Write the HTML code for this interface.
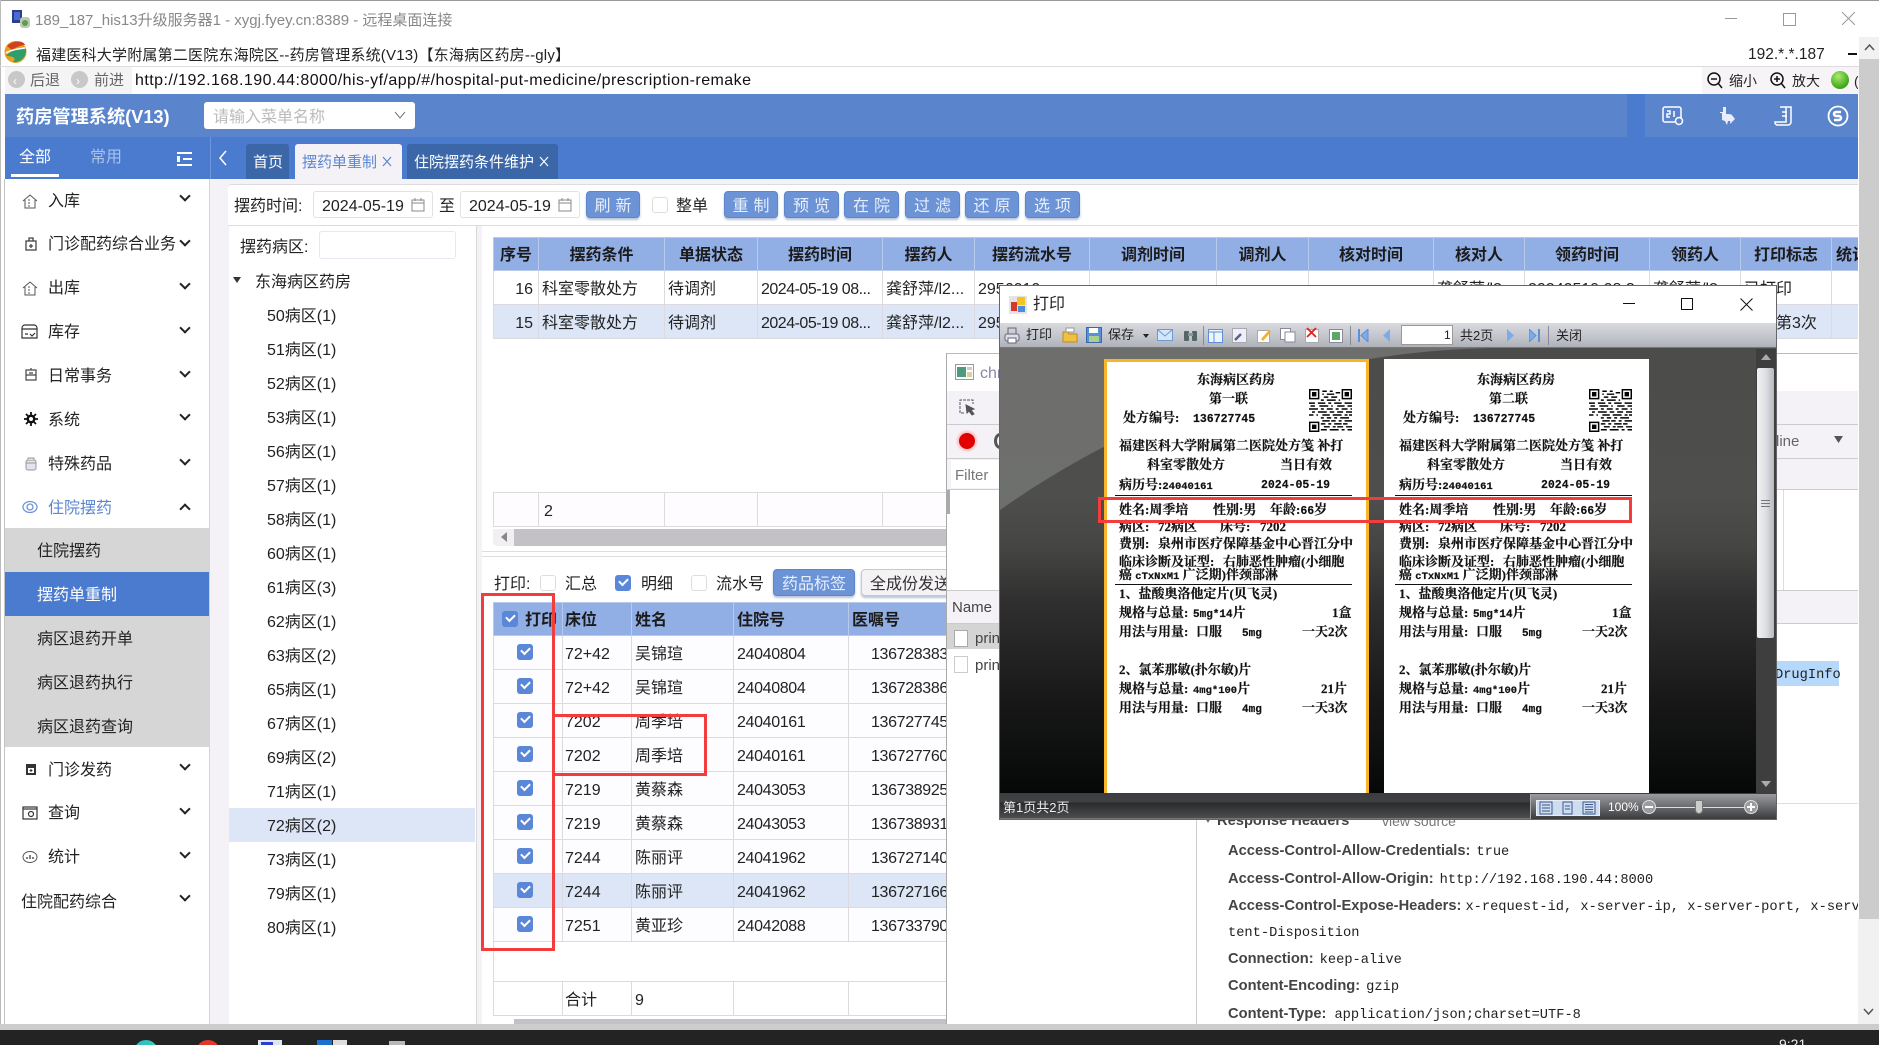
<!DOCTYPE html>
<html lang="zh-CN"><head><meta charset="utf-8"><title>药房管理系统</title>
<style>
html,body{margin:0;padding:0;background:#fff}
#r{position:relative;width:1879px;height:1045px;overflow:hidden;background:#fff;font:16px/20px "Liberation Sans","Noto Sans CJK SC",sans-serif;color:#222}
#r div,#r span.t,#r svg,#r table.a{position:absolute}
#r td div,#r th div{position:relative}
.t{white-space:nowrap;padding-top:1px}
.ch{left:181px;width:6px;height:6px;border-right:2px solid #222;border-bottom:2px solid #222;transform:rotate(45deg);margin-top:-3px}
.btn{height:27px;background:#6c93d6;border:1px solid #5d86cc;border-radius:4px;box-shadow:0 2px 2px #b9c3d6;color:#e8effb;text-align:center;line-height:29px;letter-spacing:5px;text-indent:5px;box-sizing:border-box;white-space:nowrap}
table{border-collapse:collapse;table-layout:fixed}
td,th{border:1px solid #dcd9df;padding:4px 0 0 6px;overflow:hidden;white-space:nowrap;text-align:left;font-weight:400;height:33px;box-sizing:border-box;line-height:20px}
th{background:#92afe5;border-color:#b8c9ea;font-weight:700;color:#1b1b1b}
.tt th{text-align:center;padding:4px 0 0 0}
.tt td{padding-left:3px}
.tt td:nth-child(4){letter-spacing:-.5px}
.lo td:nth-child(n+2),.lo th:nth-child(n+2){padding-left:3px}
.lo td:nth-child(2),.lo th:nth-child(2){padding-left:2px}
.lo td:nth-child(n+4){letter-spacing:-.35px}
.lo td:nth-child(5){padding-left:22px}
.lo th{letter-spacing:0!important}
.hl td{background:#dde6f6}
.cb{left:0;width:16px;height:16px;border:1px solid #ddd;border-radius:3px;background:#fff;box-sizing:border-box}
.ck{width:16px;height:16px;border-radius:3px;background:#5b87d8;box-sizing:border-box}
.ck:after{content:"";position:absolute;left:4px;top:3px;width:7px;height:4px;border-left:2px solid #fff;border-bottom:2px solid #fff;transform:rotate(-45deg)}
.w{left:267px;white-space:nowrap;height:20px}
.m{white-space:nowrap}
.sb{left:24px;width:14px;height:14px}
.pg{top:359px;width:265px;height:445px;background:#fff;overflow:hidden;font:bold 13px/16px "Liberation Serif","Noto Serif CJK SC",serif;color:#111;-webkit-text-stroke:.2px #111}
.pg div{white-space:nowrap;margin-top:1px}
.pg .ln{margin-top:0}
.pg b{font:bold 11.5px/16px "Liberation Mono",monospace}
.pg i{font:bold 10.5px/16px "Liberation Mono",monospace}
.ln{height:1px;background:#111;left:11px;width:237px}
.h{left:1228px;white-space:nowrap;font:bold 14.7px/20px "Liberation Sans",sans-serif;color:#444;width:630px;overflow:hidden;height:21px;padding-top:1px}
.h span{font:13.7px/20px "Liberation Mono",monospace;color:#222;margin-left:6px}
.red{border:3px solid #f33c3c;box-sizing:border-box}
</style></head><body><div id="r">

<!-- window chrome -->
<div style="left:0;top:0;width:1879px;height:1px;background:#999"></div>
<div style="left:0;top:0;width:1px;height:1045px;background:#bbb"></div>
<svg style="left:11px;top:9px" width="20" height="20" viewBox="0 0 20 20"><rect x="1" y="1" width="10" height="13" fill="#2b3f8c"/><rect x="3" y="3" width="6" height="8" fill="#4a6bd0"/><rect x="9" y="8" width="10" height="11" rx="3" fill="#bcc8b8"/><circle cx="14" cy="14" r="3" fill="#5aa04a"/></svg>
<span class="t" style="left:35px;top:10px;font-size:15px;color:#888">189_187_his13升级服务器1 - xygj.fyey.cn:8389 - 远程桌面连接</span>
<div style="left:1725px;top:18px;width:12px;height:1px;background:#999"></div>
<div style="left:1783px;top:13px;width:11px;height:11px;border:1px solid #999"></div>
<svg style="left:1842px;top:12px" width="13" height="13"><path d="M0 0L13 13M13 0L0 13" stroke="#999"/></svg>

<svg style="left:3px;top:40px" width="25" height="24" viewBox="0 0 25 24"><circle cx="12.500" cy="12" r="11" fill="#e8a020"/><path d="M4 6C10 0 20 0 22 5C18 5 12 8 9 10Z" fill="#d0421e"/><path d="M3 16C8 10 16 8 23 9C24 16 18 23 10 22C14 18 10 16 3 16Z" fill="#2f9e6b"/><path d="M3 13C8 10 14 9 22 8" stroke="#fff" stroke-width="1.500" fill="none"/></svg>
<span class="t" style="left:36px;top:45px;font-size:15px;letter-spacing:.2px">福建医科大学附属第二医院东海院区--药房管理系统(V13)【东海病区药房--gly】</span>
<span class="t" style="left:1748px;top:44px;font-size:15.500px">192.*.*.187</span>
<div style="left:1848px;top:53px;width:9px;height:2px;background:#111"></div>
<div style="left:0;top:66px;width:1859px;height:1px;background:#ddd"></div>

<div style="left:5px;top:67px;width:127px;height:27px;background:#f4f4f4"></div>
<div style="left:8px;top:71px;width:17px;height:17px;border-radius:50%;background:#c8c8c8"></div>
<span class="t" style="left:13px;top:70px;font-size:12px;color:#fff">‹</span>
<span class="t" style="left:30px;top:70px;font-size:15px;color:#666">后退</span>
<div style="left:71px;top:71px;width:17px;height:17px;border-radius:50%;background:#c8c8c8"></div>
<span class="t" style="left:76px;top:70px;font-size:12px;color:#fff">›</span>
<span class="t" style="left:94px;top:70px;font-size:15px;color:#666">前进</span>
<span class="t" style="left:135px;top:70px;font-size:16px;letter-spacing:.44px;color:#111">http://192.168.190.44:8000/his-yf/app/#/hospital-put-medicine/prescription-remake</span>
<div style="left:1702px;top:67px;width:157px;height:27px;background:#f6f4f7"></div>
<svg style="left:1706px;top:71px" width="18" height="18"><circle cx="8" cy="8" r="6" fill="none" stroke="#111" stroke-width="1.500"/><path d="M5 8h6M12 12l4 5" stroke="#111" stroke-width="1.500"/></svg>
<span class="t" style="left:1729px;top:70px;font-size:14px">缩小</span>
<svg style="left:1769px;top:71px" width="18" height="18"><circle cx="8" cy="8" r="6" fill="none" stroke="#111" stroke-width="1.500"/><path d="M5 8h6M8 5v6M12 12l4 5" stroke="#111" stroke-width="1.500"/></svg>
<span class="t" style="left:1792px;top:70px;font-size:14px">放大</span>
<div style="left:1831px;top:71px;width:18px;height:18px;border-radius:50%;background:radial-gradient(circle at 40% 30%,#a8ec6a,#3fa51c 70%)"></div>
<span class="t" style="left:1854px;top:70px;font-size:14px;width:4px;overflow:hidden">(</span>

<!-- right scrollbar -->
<div style="left:1859px;top:37px;width:20px;height:993px;background:#ccc"></div>
<div style="left:1859px;top:37px;width:20px;height:22px;background:#f1f1f1"></div>
<svg style="left:1864px;top:43px" width="11" height="8"><path d="M1 7L5.500 2L10 7" stroke="#555" stroke-width="1.500" fill="none"/></svg>
<div style="left:1858px;top:919px;width:21px;height:105px;background:#f1f1f1"></div>
<svg style="left:1863px;top:1008px" width="11" height="8"><path d="M1 1L5.500 6L10 1" stroke="#555" stroke-width="1.500" fill="none"/></svg>

<!-- header -->
<div style="left:5px;top:94px;width:1853px;height:43px;background:#5a85cc"></div>
<div style="left:1627px;top:94px;width:18px;height:43px;background:#4b7bcf"></div>
<span class="t" style="left:16px;top:105px;font-size:18.200px;line-height:22px;font-weight:700;color:#fff">药房管理系统(V13)</span>
<div style="left:204px;top:102px;width:211px;height:27px;background:#fff;border-radius:3px"></div>
<span class="t" style="left:213px;top:107px;color:#bbb">请输入菜单名称</span>
<svg style="left:394px;top:111px" width="12" height="9"><path d="M1 1L6 7L11 1" stroke="#777" fill="none"/></svg>
<svg style="left:1661px;top:105px" width="26" height="22" viewBox="0 0 26 22" fill="none" stroke="#fff" stroke-width="1.500"><rect x="2" y="2" width="18" height="15" rx="2"/><circle cx="18" cy="16" r="3.500" fill="#5a85cc"/><path d="M6 6h3v3H6v3h3M13 6v6"/></svg>
<svg style="left:1717px;top:105px" width="20" height="22" viewBox="0 0 20 22" fill="#e8effb"><path d="M6 2h3v7h3l3 1v6l-4 0-1 4-2-4-3-1V8L3 8V7h3z"/><path d="M14 9l4 5-5 5z"/></svg>
<svg style="left:1773px;top:105px" width="20" height="22" viewBox="0 0 20 22" fill="none" stroke="#fff" stroke-width="1.500"><path d="M7 2h11v15a3 3 0 0 1-3 3H4a3 3 0 0 1-2-3h11V2M9 7h5M9 11h5"/></svg>
<svg style="left:1827px;top:105px" width="22" height="22" viewBox="0 0 22 22" fill="none" stroke="#fff" stroke-width="1.800"><circle cx="11" cy="11" r="9.500"/><path d="M14 7H9a2 2 0 0 0 0 4h3a2 2 0 0 1 0 4H7" stroke-width="2.500"/></svg>

<div style="left:5px;top:137px;width:1853px;height:42px;background:#4b7bcf"></div>
<span class="t" style="left:19px;top:147px;color:#fff">全部</span>
<span class="t" style="left:90px;top:147px;color:#a9c2ec">常用</span>
<div style="left:11px;top:174px;width:48px;height:3px;background:#fff"></div>
<div style="left:177px;top:152px;width:15px;height:2px;background:#fff"></div>
<div style="left:183px;top:158px;width:9px;height:2px;background:#fff"></div>
<div style="left:177px;top:164px;width:15px;height:2px;background:#fff"></div>
<div style="left:177px;top:156px;width:3px;height:6px;background:#fff"></div>
<div style="left:210px;top:137px;width:1px;height:42px;background:#6e97db"></div>
<svg style="left:218px;top:150px" width="10" height="16"><path d="M8 1L2 8L8 15" stroke="#fff" stroke-width="1.500" fill="none"/></svg>
<div style="left:246px;top:144px;width:43px;height:35px;background:#3b67a8;border-radius:3px 3px 0 0"></div>
<span class="t" style="left:253px;top:152px;font-size:15px;color:#fff">首页</span>
<div style="left:295px;top:144px;width:107px;height:35px;background:#f5f2f7;border-radius:3px 3px 0 0"></div>
<span class="t" style="left:302px;top:152px;font-size:15px;color:#5b87d0">摆药单重制</span>
<svg style="left:382px;top:156px" width="10" height="11"><path d="M1 1L9 10M9 1L1 10" stroke="#5b87d0" stroke-width="1.200"/></svg>
<div style="left:407px;top:144px;width:151px;height:35px;background:#3b67a8;border-radius:3px 3px 0 0"></div>
<span class="t" style="left:414px;top:152px;font-size:15px;color:#fff">住院摆药条件维护</span>
<svg style="left:539px;top:156px" width="10" height="11"><path d="M1 1L9 10M9 1L1 10" stroke="#fff" stroke-width="1.200"/></svg>

<!-- body -->
<div style="left:5px;top:179px;width:1853px;height:845px;background:#f5f2f7"></div>
<div style="left:4px;top:179px;width:1px;height:845px;background:#c4c4c4"></div>
<div style="left:5px;top:179px;width:204px;height:845px;background:#fff"></div>
<div style="left:209px;top:179px;width:1px;height:845px;background:#d4d4d4"></div>

<!-- sidebar -->
<div style="left:5px;top:528px;width:204px;height:219px;background:#d6d6d6"></div>
<div style="left:5px;top:572px;width:204px;height:44px;background:#4b7bcf"></div>
<svg class="sb" style="top:194px;left:22px;width:16px;height:16px" viewBox="0 0 16 16" fill="none" stroke="#555"><path d="M1 7L8 1L15 7M3 6v8h10V6M6 6h2M6 9h2M6 12h2" /></svg>
<span class="t m" style="left:48px;top:191px">入库</span><div class="ch" style="top:195px"></div>
<svg class="sb" style="top:237px" viewBox="0 0 14 14" fill="none" stroke="#444" stroke-width="1.300"><rect x="2" y="4" width="10" height="9"/><path d="M5 4V1h4v3M7 7v4M5 9h4"/></svg>
<span class="t m" style="left:48px;top:234px">门诊配药综合业务</span><div class="ch" style="top:240px"></div>
<svg class="sb" style="top:281px;left:22px;width:16px;height:16px" viewBox="0 0 16 16" fill="none" stroke="#555"><path d="M1 7L8 1L15 7M3 6v8h10V6M6 6h2M6 9h2M6 12h2"/></svg>
<span class="t m" style="left:48px;top:278px">出库</span><div class="ch" style="top:283px"></div>
<svg class="sb" style="top:323px;left:21px;width:17px;height:16px" viewBox="0 0 17 16" fill="none" stroke="#333" stroke-width="1.200"><path d="M1 5a3 3 0 0 1 3-3h9a3 3 0 0 1 3 3v10H1zM1 6h15M4 11h3M9 11l2 2 3-3"/></svg>
<span class="t m" style="left:48px;top:322px">库存</span><div class="ch" style="top:327px"></div>
<svg class="sb" style="top:368px" viewBox="0 0 14 14" fill="none" stroke="#444" stroke-width="1.200"><rect x="2" y="2" width="10" height="10"/><path d="M7 0v2M2 7h10M5 5h4"/></svg>
<span class="t m" style="left:48px;top:366px">日常事务</span><div class="ch" style="top:371px"></div>
<svg class="sb" style="top:412px" viewBox="0 0 14 14"><circle cx="7" cy="7" r="3" fill="none" stroke="#111" stroke-width="3"/><path d="M7 0v14M0 7h14M2 2l10 10M12 2L2 12" stroke="#111" stroke-width="1.800"/><circle cx="7" cy="7" r="2" fill="#fff"/></svg>
<span class="t m" style="left:48px;top:410px">系统</span><div class="ch" style="top:414px"></div>
<svg class="sb" style="top:457px" viewBox="0 0 14 14" fill="#dfe4ee" stroke="#999"><rect x="2" y="3" width="10" height="10" rx="2"/><path d="M4 3V1h6v2M2 6h10"/></svg>
<span class="t m" style="left:48px;top:454px">特殊药品</span><div class="ch" style="top:459px"></div>
<svg class="sb" style="top:500px;left:22px;width:16px;height:14px" viewBox="0 0 16 14" fill="none" stroke="#6f95dc" stroke-width="1.300"><ellipse cx="8" cy="7" rx="7" ry="5.500"/><circle cx="8" cy="7" r="3"/></svg>
<span class="t m" style="left:48px;top:498px;color:#5b87d0">住院摆药</span><div class="ch" style="top:508px;transform:rotate(225deg)"></div>
<span class="t m" style="left:37px;top:541px">住院摆药</span>
<span class="t m" style="left:37px;top:585px;color:#fff">摆药单重制</span>
<span class="t m" style="left:37px;top:629px">病区退药开单</span>
<span class="t m" style="left:37px;top:673px">病区退药执行</span>
<span class="t m" style="left:37px;top:717px">病区退药查询</span>
<svg class="sb" style="top:762px" viewBox="0 0 14 14"><rect x="2" y="2" width="10" height="11" fill="#333"/><rect x="4" y="6" width="6" height="5" fill="#fff"/><path d="M7 7v3M5.500 8.500h3" stroke="#333"/></svg>
<span class="t m" style="left:48px;top:760px">门诊发药</span><div class="ch" style="top:764px"></div>
<svg class="sb" style="top:806px;left:22px;width:16px;height:14px" viewBox="0 0 16 14" fill="none" stroke="#333" stroke-width="1.200"><rect x="1" y="1" width="14" height="12"/><circle cx="9" cy="8" r="2.500"/><path d="M1 3h14"/></svg>
<span class="t m" style="left:48px;top:803px">查询</span><div class="ch" style="top:808px"></div>
<svg class="sb" style="top:850px;left:22px;width:16px;height:14px" viewBox="0 0 16 14"><ellipse cx="8" cy="7" rx="7" ry="5.500" fill="none" stroke="#555"/><path d="M5 9V7M8 9V5M11 9V7" stroke="#555" stroke-width="1.500"/></svg>
<span class="t m" style="left:48px;top:847px">统计</span><div class="ch" style="top:852px"></div>
<span class="t m" style="left:21px;top:892px">住院配药综合</span><div class="ch" style="top:895px"></div>

<!-- main toolbar -->
<div style="left:228px;top:184px;width:1630px;height:42px;background:#fff;border-top:1px solid #dcdcdc;border-bottom:1px solid #dcdcdc;box-sizing:border-box;border-radius:3px 0 0 0"></div>
<span class="t" style="left:234px;top:196px">摆药时间:</span>
<div style="left:313px;top:191px;width:120px;height:27px;background:#fff;border:1px solid #e2e2e2;border-radius:3px;box-sizing:border-box"></div>
<span class="t" style="left:322px;top:196px">2024-05-19</span>
<svg style="left:411px;top:198px" width="14" height="14" fill="none" stroke="#888"><rect x="1" y="2" width="12" height="11"/><path d="M1 5h12M4 0v3M10 0v3"/></svg>
<span class="t" style="left:439px;top:196px">至</span>
<div style="left:460px;top:191px;width:120px;height:27px;background:#fff;border:1px solid #e2e2e2;border-radius:3px;box-sizing:border-box"></div>
<span class="t" style="left:469px;top:196px">2024-05-19</span>
<svg style="left:558px;top:198px" width="14" height="14" fill="none" stroke="#888"><rect x="1" y="2" width="12" height="11"/><path d="M1 5h12M4 0v3M10 0v3"/></svg>
<div class="btn" style="left:586px;top:191px;width:54px">刷新</div>
<div class="cb" style="left:652px;top:197px"></div>
<span class="t" style="left:676px;top:196px">整单</span>
<div class="btn" style="left:724px;top:191px;width:54px">重制</div>
<div class="btn" style="left:784px;top:191px;width:55px">预览</div>
<div class="btn" style="left:844px;top:191px;width:55px">在院</div>
<div class="btn" style="left:905px;top:191px;width:55px">过滤</div>
<div class="btn" style="left:965px;top:191px;width:54px">还原</div>
<div class="btn" style="left:1025px;top:191px;width:55px">选项</div>

<!-- ward panel -->
<div style="left:229px;top:226px;width:247px;height:798px;background:#fff"></div>
<div style="left:476px;top:226px;width:1px;height:798px;background:#d8d8d8"></div>
<span class="t" style="left:240px;top:237px">摆药病区:</span>
<div style="left:319px;top:231px;width:137px;height:28px;background:#fff;border:1px solid #e4e8f2;border-radius:3px;box-sizing:border-box"></div>
<svg style="left:233px;top:277px" width="9" height="7"><path d="M0 0h8L4 6z" fill="#333"/></svg>
<span class="t" style="left:255px;top:272px">东海病区药房</span>
<div style="left:229px;top:808px;width:246px;height:34px;background:#dde6f6"></div>
<span class="t w" style="top:306px">50病区(1)</span>
<span class="t w" style="top:340px">51病区(1)</span>
<span class="t w" style="top:374px">52病区(1)</span>
<span class="t w" style="top:408px">53病区(1)</span>
<span class="t w" style="top:442px">56病区(1)</span>
<span class="t w" style="top:476px">57病区(1)</span>
<span class="t w" style="top:510px">58病区(1)</span>
<span class="t w" style="top:544px">60病区(1)</span>
<span class="t w" style="top:578px">61病区(3)</span>
<span class="t w" style="top:612px">62病区(1)</span>
<span class="t w" style="top:646px">63病区(2)</span>
<span class="t w" style="top:680px">65病区(1)</span>
<span class="t w" style="top:714px">67病区(1)</span>
<span class="t w" style="top:748px">69病区(2)</span>
<span class="t w" style="top:782px">71病区(1)</span>
<span class="t w" style="top:816px">72病区(2)</span>
<span class="t w" style="top:850px">73病区(1)</span>
<span class="t w" style="top:884px">79病区(1)</span>
<span class="t w" style="top:918px">80病区(1)</span>

<!-- right content -->
<div style="left:482px;top:226px;width:1376px;height:798px;background:#fff"></div>
<div style="left:493px;top:237px;width:1365px;height:102px;overflow:hidden">
<table class="tt" style="width:1440px;background:#fff">
<colgroup><col style="width:45px"><col style="width:126px"><col style="width:93px"><col style="width:125px"><col style="width:92px"><col style="width:115px"><col style="width:127px"><col style="width:92px"><col style="width:125px"><col style="width:91px"><col style="width:125px"><col style="width:91px"><col style="width:91px"><col style="width:102px"></colgroup>
<tr><th>序号</th><th>摆药条件</th><th>单据状态</th><th>摆药时间</th><th>摆药人</th><th>摆药流水号</th><th>调剂时间</th><th>调剂人</th><th>核对时间</th><th>核对人</th><th>领药时间</th><th>领药人</th><th>打印标志</th><th style="text-align:left;padding-left:4px">统计</th></tr>
<tr style="height:34px"><td style="text-align:right;padding:4px 5px 0 0">16</td><td>科室零散处方</td><td>待调剂</td><td>2024-05-19 08...</td><td>龚舒萍/l2...</td><td>2956010</td><td></td><td></td><td></td><td>龚舒萍/l2...</td><td>20240519 08:3</td><td>龚舒萍/l2...</td><td>已打印</td><td></td></tr>
<tr class="hl" style="height:34px"><td style="text-align:right;padding:4px 5px 0 0">15</td><td>科室零散处方</td><td>待调剂</td><td>2024-05-19 08...</td><td>龚舒萍/l2...</td><td>2956011</td><td></td><td></td><td></td><td></td><td></td><td></td><td>打印第3次</td><td></td></tr>
</table></div>
<div style="left:493px;top:492px;width:453px;height:35px;overflow:hidden">
<table style="width:500px;background:#fefcff"><colgroup><col style="width:45px"><col style="width:126px"><col style="width:93px"><col style="width:125px"><col style="width:111px"></colgroup>
<tr style="height:34px"><td></td><td style="padding-left:5px">2</td><td></td><td></td><td></td></tr></table></div>
<div style="left:493px;top:529px;width:453px;height:17px;background:#f1eff2;border-radius:0 0 0 4px"></div>
<div style="left:514px;top:529px;width:432px;height:17px;background:#c3c1c5"></div>
<svg style="left:500px;top:532px" width="8" height="11"><path d="M7 0v10L1 5z" fill="#888"/></svg>
<div style="left:482px;top:551px;width:1376px;height:1px;background:#ddd"></div>
<div style="left:482px;top:556px;width:1376px;height:1px;background:#ddd"></div>

<span class="t" style="left:494px;top:574px">打印:</span>
<div class="cb" style="left:540px;top:575px"></div><span class="t" style="left:565px;top:574px">汇总</span>
<div class="ck" style="left:615px;top:575px"></div><span class="t" style="left:641px;top:574px">明细</span>
<div class="cb" style="left:691px;top:575px"></div><span class="t" style="left:716px;top:574px">流水号</span>
<div class="btn" style="left:773px;top:569px;width:82px;letter-spacing:0;text-indent:0">药品标签</div>
<div class="btn" style="left:861px;top:569px;width:110px;letter-spacing:0;text-indent:0;background:#f4f2f5;border-color:#c8c8c8;color:#333;text-align:left;padding-left:8px">全成份发送</div>

<div style="left:493px;top:602px;width:453px;height:340px;overflow:hidden">
<table class="lo" style="width:500px;background:#fdfcfe"><colgroup><col style="width:69px"><col style="width:69px"><col style="width:102px"><col style="width:115px"><col style="width:145px"></colgroup>
<tr><th style="padding-left:8px"><div class="ck" style="float:left;margin-top:0"></div><span style="margin-left:7px">打印</span></th><th>床位</th><th>姓名</th><th>住院号</th><th>医嘱号</th></tr>
<tr style="height:34px"><td><div class="ck" style="margin:-6px 0 0 17px"></div></td><td>72+42</td><td>吴锦瑄</td><td>24040804</td><td>136728383</td></tr>
<tr style="height:34px"><td><div class="ck" style="margin:-6px 0 0 17px"></div></td><td>72+42</td><td>吴锦瑄</td><td>24040804</td><td>136728386</td></tr>
<tr style="height:34px"><td><div class="ck" style="margin:-6px 0 0 17px"></div></td><td>7202</td><td>周季培</td><td>24040161</td><td>136727745</td></tr>
<tr style="height:34px"><td><div class="ck" style="margin:-6px 0 0 17px"></div></td><td>7202</td><td>周季培</td><td>24040161</td><td>136727760</td></tr>
<tr style="height:34px"><td><div class="ck" style="margin:-6px 0 0 17px"></div></td><td>7219</td><td>黄蔡森</td><td>24043053</td><td>136738925</td></tr>
<tr style="height:34px"><td><div class="ck" style="margin:-6px 0 0 17px"></div></td><td>7219</td><td>黄蔡森</td><td>24043053</td><td>136738931</td></tr>
<tr style="height:34px"><td><div class="ck" style="margin:-6px 0 0 17px"></div></td><td>7244</td><td>陈丽评</td><td>24041962</td><td>136727140</td></tr>
<tr class="hl" style="height:34px"><td><div class="ck" style="margin:-6px 0 0 17px"></div></td><td>7244</td><td>陈丽评</td><td>24041962</td><td>136727166</td></tr>
<tr style="height:34px"><td><div class="ck" style="margin:-6px 0 0 17px"></div></td><td>7251</td><td>黄亚珍</td><td>24042088</td><td>136733790</td></tr>
</table></div>
<div style="left:493px;top:942px;width:1px;height:40px;background:#dcd9df"></div>
<div style="left:493px;top:981px;width:453px;height:35px;overflow:hidden">
<table class="lo" style="width:500px;background:#fff"><colgroup><col style="width:69px"><col style="width:69px"><col style="width:102px"><col style="width:115px"><col style="width:145px"></colgroup>
<tr style="height:34px"><td></td><td>合计</td><td>9</td><td></td><td></td></tr></table></div>
<div style="left:514px;top:1019px;width:432px;height:5px;background:#c3c1c5"></div>

<!-- devtools panel -->
<div style="left:946px;top:353px;width:912px;height:671px;background:#fff;border-left:1px solid #aaa;border-top:1px solid #bbb;box-sizing:border-box"></div>
<svg style="left:955px;top:364px" width="19" height="16"><rect x=".5" y=".5" width="18" height="15" fill="#fff" stroke="#999"/><rect x="2" y="3" width="9" height="10" fill="#4f9a7f"/><rect x="12" y="3" width="5" height="3" fill="#ccc"/><rect x="12" y="8" width="5" height="5" fill="#d8d0a0"/></svg>
<span class="t" style="left:980px;top:363px;font-size:16px;color:#88a;width:19px;overflow:hidden">chrome</span>
<div style="left:947px;top:391px;width:911px;height:98px;background:#f5f2f7"></div>
<div style="left:947px;top:424px;width:911px;height:1px;background:#ccc"></div>
<div style="left:947px;top:458px;width:911px;height:1px;background:#ccc"></div>
<div style="left:947px;top:489px;width:911px;height:1px;background:#ccc"></div>
<svg style="left:959px;top:399px" width="18" height="18" fill="none" stroke="#555"><path d="M5 14H1V1h13v4" stroke-dasharray="3 1"/><path d="M7 6l8 4-3 1 3 4-2 1-3-4-2 2z" fill="#555"/></svg>
<div style="left:959px;top:433px;width:16px;height:16px;border-radius:50%;background:#e00000;box-shadow:0 0 2px 2px #f6c0c0"></div>
<div style="left:994px;top:433px;width:12px;height:16px;border:3px solid #555;border-radius:50%;box-sizing:border-box"></div>
<div style="left:951px;top:460px;width:48px;height:28px;background:#fff"></div>
<span class="t" style="left:955px;top:465px;font-size:15px;color:#777">Filter</span>
<div style="left:947px;top:490px;width:3px;height:24px;background:#aaa"></div>
<div style="left:947px;top:590px;width:911px;height:34px;background:#f5f2f7;border-top:1px solid #ccc;border-bottom:1px solid #ccc;box-sizing:border-box"></div>
<span class="t" style="left:952px;top:597px;font-size:15px;color:#444">Name</span>
<div style="left:947px;top:624px;width:60px;height:25px;background:#d4d4d4"></div>
<div style="left:954px;top:630px;width:14px;height:17px;background:#fff;border:1px solid #aaa;box-sizing:border-box"></div>
<span class="t" style="left:975px;top:628px;font-size:15px;color:#444">print</span>
<div style="left:954px;top:656px;width:14px;height:17px;background:#fff;border:1px solid #ccc;box-sizing:border-box"></div>
<span class="t" style="left:975px;top:655px;font-size:15px;color:#444">print</span>
<div style="left:1196px;top:590px;width:1px;height:434px;background:#ccc"></div>
<div style="left:1783px;top:490px;width:1px;height:100px;background:#ddd"></div>
<span class="t" style="left:1776px;top:431px;font-size:15px;color:#666">line</span>
<svg style="left:1834px;top:436px" width="10" height="8"><path d="M0 0h9L4.500 7z" fill="#555"/></svg>
<div style="left:1776px;top:661px;width:63px;height:25px;background:#b5d8fb"></div>
<span class="t" style="left:1775px;top:665px;font:13.7px/20px 'Liberation Mono',monospace;color:#222">DrugInfo</span>
<div style="left:1776px;top:803px;width:82px;height:1px;background:#ddd"></div>

<svg style="left:1204px;top:816px" width="9" height="8"><path d="M0 0h8L4 7z" fill="#666"/></svg>
<span class="t" style="left:1217px;top:810px;font:bold 14.7px/20px 'Liberation Sans',sans-serif;color:#444">Response Headers</span>
<span class="t" style="left:1382px;top:810px;font-size:14px;color:#777">view source</span>
<div class="h" style="top:840px">Access-Control-Allow-Credentials:<span>true</span></div>
<div class="h" style="top:868px">Access-Control-Allow-Origin:<span>http://192.168.190.44:8000</span></div>
<div class="h" style="top:895px">Access-Control-Expose-Headers:<span style="margin-left:4px">x-request-id, x-server-ip, x-server-port, x-server-timing</span></div>
<div class="h" style="top:921px"><span style="margin:0">tent-Disposition</span></div>
<div class="h" style="top:948px">Connection:<span>keep-alive</span></div>
<div class="h" style="top:975px">Content-Encoding:<span>gzip</span></div>
<div class="h" style="top:1003px;height:20px">Content-Type:<span style="margin-left:8px">application/json;charset=UTF-8</span></div>

<!-- print dialog -->
<div style="left:999px;top:285px;width:778px;height:535px;background:#fff;border:1px solid #666;box-sizing:border-box"></div>
<svg style="left:1009px;top:296px" width="18" height="18"><rect width="18" height="18" fill="#e4e4e4"/><rect x="2" y="6" width="6" height="9" fill="#d8362a"/><rect x="8" y="1" width="8" height="8" fill="#f2c522"/><rect x="9" y="10" width="7" height="6" fill="#4d8be0"/></svg>
<span class="t" style="left:1033px;top:294px">打印</span>
<div style="left:1623px;top:303px;width:12px;height:1px;background:#111"></div>
<div style="left:1681px;top:298px;width:12px;height:12px;border:1px solid #111;box-sizing:border-box"></div>
<svg style="left:1740px;top:298px" width="13" height="13"><path d="M.5 .5L12.500 12.500M12.500 .5L.5 12.500" stroke="#111"/></svg>
<div style="left:1000px;top:323px;width:776px;height:25px;background:linear-gradient(#d9dadf,#c2c4cb 60%,#aeb1b8);border-bottom:1px solid #777;box-sizing:border-box"></div>

<svg style="left:1004px;top:327px" width="16" height="17" fill="none" stroke="#667"><path d="M4 7V1h8v6"/><rect x="1" y="7" width="14" height="7" rx="2" fill="#dde"/><rect x="4" y="11" width="8" height="5" fill="#fff"/></svg>
<span class="t" style="left:1026px;top:324px;font-size:13px">打印</span>
<svg style="left:1062px;top:327px" width="16" height="16"><path d="M1 5h5l1 2h8v8H1z" fill="#f0c040" stroke="#c08a20"/><rect x="4" y="1" width="8" height="4" fill="#fff" stroke="#999"/></svg>
<svg style="left:1086px;top:327px" width="16" height="16"><rect x=".5" y=".5" width="15" height="15" fill="#5b8fd8" stroke="#3a68a8"/><rect x="3" y="1" width="9" height="5" fill="#fff"/><rect x="3" y="9" width="10" height="6" fill="#a9d08a"/></svg>
<span class="t" style="left:1108px;top:324px;font-size:13px">保存</span>
<svg style="left:1143px;top:334px" width="7" height="4"><path d="M0 0h6L3 4z" fill="#222"/></svg>
<svg style="left:1157px;top:329px" width="16" height="12"><rect x=".5" y=".5" width="15" height="11" fill="#d4e6fa" stroke="#6c9ad0"/><path d="M1 1l7 6 7-6" fill="none" stroke="#6c9ad0"/></svg>
<svg style="left:1183px;top:328px" width="15" height="14"><rect x="1" y="3" width="5" height="10" fill="#566" rx="1"/><rect x="9" y="3" width="5" height="10" fill="#566" rx="1"/><rect x="5" y="5" width="5" height="3" fill="#899"/></svg>
<div style="left:1203px;top:326px;width:1px;height:19px;background:#889"></div>
<svg style="left:1208px;top:329px" width="15" height="14"><rect x=".5" y=".5" width="14" height="13" fill="#eef4fc" stroke="#5b8fd8"/><path d="M1 3h13M6 3v10" stroke="#5b8fd8"/></svg>
<svg style="left:1232px;top:328px" width="15" height="15"><rect x=".5" y=".5" width="14" height="14" fill="#eef" stroke="#aaa"/><path d="M3 12l6-6" stroke="#567" stroke-width="2.500"/></svg>
<svg style="left:1257px;top:328px" width="15" height="15"><rect x=".5" y="2.500" width="12" height="12" fill="#fff" stroke="#aaa"/><path d="M4 11l8-9 2 2-8 9z" fill="#f0b030"/></svg>
<svg style="left:1280px;top:328px" width="16" height="15"><rect x=".5" y=".5" width="10" height="11" fill="#fff" stroke="#889"/><rect x="5" y="4" width="10" height="10" fill="#fff" stroke="#889"/></svg>
<svg style="left:1305px;top:327px" width="14" height="16"><rect x=".5" y="2.500" width="13" height="13" fill="#fff" stroke="#aaa"/><path d="M2 1l9 9M11 1l-9 9" stroke="#d22" stroke-width="1.800"/></svg>
<svg style="left:1329px;top:329px" width="14" height="14"><rect x=".5" y=".5" width="13" height="13" fill="#fff" stroke="#889"/><rect x="3" y="3" width="8" height="8" fill="#5ca86a"/></svg>
<div style="left:1350px;top:326px;width:1px;height:19px;background:#889"></div>
<svg style="left:1358px;top:329px" width="11" height="13"><rect width="2" height="13" fill="#5b8fd8"/><path d="M10 0v13L3 6.500z" fill="#7eaae6" stroke="#5b8fd8"/></svg>
<svg style="left:1383px;top:329px" width="8" height="13"><path d="M7 0v13L0 6.500z" fill="#7eaae6"/></svg>
<div style="left:1401px;top:325px;width:52px;height:20px;background:#fff;border:1px solid #999;box-sizing:border-box"></div>
<span class="t" style="left:1444px;top:324px;font-size:12px">1</span>
<span class="t" style="left:1460px;top:325px;font-size:13px">共2页</span>
<svg style="left:1507px;top:329px" width="8" height="13"><path d="M0 0v13L7 6.500z" fill="#7eaae6"/></svg>
<svg style="left:1529px;top:329px" width="11" height="13"><rect x="9" width="2" height="13" fill="#5b8fd8"/><path d="M0 0v13L7 6.500z" fill="#7eaae6" stroke="#5b8fd8"/></svg>
<div style="left:1548px;top:326px;width:1px;height:19px;background:#889"></div>
<span class="t" style="left:1556px;top:325px;font-size:13px">关闭</span>

<!-- canvas -->
<div style="left:1000px;top:348px;width:776px;height:445px;overflow:hidden;background:linear-gradient(#4c4c4a 0,#4e4f4d 150px,#454543 199px,#303030 252px,#181818 352px,#060808 100%)"></div>
<svg style="left:1000px;top:348px" width="776" height="445"><path d="M0 0H490C300 4 130 70 0 162Z" fill="#7a7b78" opacity=".75"/></svg>

<!-- receipts -->
<div class="pg" style="left:1104px;box-shadow:inset 0 0 0 3px #f8b52c">
<div style="left:93px;top:12px">东海病区药房</div><div style="left:105px;top:31px">第一联</div>
<div style="left:19px;top:50px">处方编号:</div><div style="left:89px;top:50px"><b>136727745</b></div>
<svg style="left:205px;top:30px" width="43" height="43" viewBox="0 0 29 29"><g fill="none" stroke="#000"><rect x=".5" y=".5" width="6" height="6"/><rect x="22.500" y=".5" width="6" height="6"/><rect x=".5" y="22.500" width="6" height="6"/><path d="M9 1.500h3M14 1.500h2M18 2.500h3M9 3.500h1M12 3.500h5M10 5.500h3M15 5.500h4M8 7.500h2M12 7.500h6M20 7.500h1M0 9.500h4M6 9.500h5M13 9.500h2M17 9.500h5M24 9.500h5M1 11.500h3M7 11.500h6M15 11.500h1M19 11.500h5M26 11.500h3M0 13.500h6M8 13.500h2M12 13.500h4M18 13.500h2M22 13.500h4M28 13.500h1M2 15.500h2M6 15.500h6M14 15.500h3M19 15.500h4M25 15.500h4M0 17.500h3M5 17.500h1M9 17.500h5M16 17.500h6M24 17.500h2M27 17.500h2M8 19.500h2M12 19.500h3M17 19.500h2M21 19.500h6M9 21.500h5M15 21.500h3M20 21.500h2M24 21.500h5M8 23.500h3M13 23.500h2M17 23.500h5M23 23.500h3M10 25.500h4M16 25.500h2M19 25.500h4M25 25.500h4M8 27.500h4M14 27.500h6M22 27.500h2M26 27.500h3"/></g><g fill="#000"><rect x="2" y="2" width="3" height="3"/><rect x="24" y="2" width="3" height="3"/><rect x="2" y="24" width="3" height="3"/></g></svg>
<div style="left:15px;top:78px">福建医科大学附属第二医院处方笺 补打</div>
<div style="left:43px;top:97px">科室零散处方</div><div style="left:176px;top:97px">当日有效</div>
<div style="left:15px;top:117px">病历号:<i>24040161</i></div><div style="left:157px;top:116px"><b>2024-05-19</b></div>
<div class="ln" style="top:136px"></div>
<div style="left:15px;top:142px">姓名:周季培</div><div style="left:109px;top:142px">性别:男</div><div style="left:166px;top:142px">年龄:<b>66</b>岁</div>
<div style="left:15px;top:159px">病区:</div><div style="left:54px;top:159px">72病区</div><div style="left:116px;top:159px">床号:</div><div style="left:156px;top:159px">7202</div>
<div style="left:15px;top:176px">费别:</div><div style="left:54px;top:176px">泉州市医疗保障基金中心晋江分中</div>
<div style="left:15px;top:194px">临床诊断及证型:</div><div style="left:119px;top:194px">右肺恶性肿瘤(小细胞</div>
<div style="left:15px;top:207px">癌 <i>cTxNxM1</i> 广泛期)伴颈部淋</div>
<div class="ln" style="top:225px"></div>
<div style="left:15px;top:226px">1、盐酸奥洛他定片(贝飞灵)</div>
<div style="left:15px;top:245px">规格与总量:</div><div style="left:89px;top:245px"><i style="font-size:11px">5mg*14</i>片</div><div style="left:228px;top:245px">1盒</div>
<div style="left:15px;top:264px">用法与用量:</div><div style="left:92px;top:264px">口服</div><div style="left:138px;top:264px"><i style="font-size:11px">5mg</i></div><div style="left:198px;top:264px">一天2次</div>
<div style="left:15px;top:302px">2、氯苯那敏(扑尔敏)片</div>
<div style="left:15px;top:321px">规格与总量:</div><div style="left:89px;top:321px"><i>4mg*100</i>片</div><div style="left:217px;top:321px">21片</div>
<div style="left:15px;top:340px">用法与用量:</div><div style="left:92px;top:340px">口服</div><div style="left:138px;top:340px"><i style="font-size:11px">4mg</i></div><div style="left:198px;top:340px">一天3次</div>
</div>
<div class="pg" style="left:1384px">
<div style="left:93px;top:12px">东海病区药房</div><div style="left:105px;top:31px">第二联</div>
<div style="left:19px;top:50px">处方编号:</div><div style="left:89px;top:50px"><b>136727745</b></div>
<svg style="left:205px;top:30px" width="43" height="43" viewBox="0 0 29 29"><g fill="none" stroke="#000"><rect x=".5" y=".5" width="6" height="6"/><rect x="22.500" y=".5" width="6" height="6"/><rect x=".5" y="22.500" width="6" height="6"/><path d="M9 1.500h3M14 1.500h2M18 2.500h3M9 3.500h1M12 3.500h5M10 5.500h3M15 5.500h4M8 7.500h2M12 7.500h6M20 7.500h1M0 9.500h4M6 9.500h5M13 9.500h2M17 9.500h5M24 9.500h5M1 11.500h3M7 11.500h6M15 11.500h1M19 11.500h5M26 11.500h3M0 13.500h6M8 13.500h2M12 13.500h4M18 13.500h2M22 13.500h4M28 13.500h1M2 15.500h2M6 15.500h6M14 15.500h3M19 15.500h4M25 15.500h4M0 17.500h3M5 17.500h1M9 17.500h5M16 17.500h6M24 17.500h2M27 17.500h2M8 19.500h2M12 19.500h3M17 19.500h2M21 19.500h6M9 21.500h5M15 21.500h3M20 21.500h2M24 21.500h5M8 23.500h3M13 23.500h2M17 23.500h5M23 23.500h3M10 25.500h4M16 25.500h2M19 25.500h4M25 25.500h4M8 27.500h4M14 27.500h6M22 27.500h2M26 27.500h3"/></g><g fill="#000"><rect x="2" y="2" width="3" height="3"/><rect x="24" y="2" width="3" height="3"/><rect x="2" y="24" width="3" height="3"/></g></svg>
<div style="left:15px;top:78px">福建医科大学附属第二医院处方笺 补打</div>
<div style="left:43px;top:97px">科室零散处方</div><div style="left:176px;top:97px">当日有效</div>
<div style="left:15px;top:117px">病历号:<i>24040161</i></div><div style="left:157px;top:116px"><b>2024-05-19</b></div>
<div class="ln" style="top:136px"></div>
<div style="left:15px;top:142px">姓名:周季培</div><div style="left:109px;top:142px">性别:男</div><div style="left:166px;top:142px">年龄:<b>66</b>岁</div>
<div style="left:15px;top:159px">病区:</div><div style="left:54px;top:159px">72病区</div><div style="left:116px;top:159px">床号:</div><div style="left:156px;top:159px">7202</div>
<div style="left:15px;top:176px">费别:</div><div style="left:54px;top:176px">泉州市医疗保障基金中心晋江分中</div>
<div style="left:15px;top:194px">临床诊断及证型:</div><div style="left:119px;top:194px">右肺恶性肿瘤(小细胞</div>
<div style="left:15px;top:207px">癌 <i>cTxNxM1</i> 广泛期)伴颈部淋</div>
<div class="ln" style="top:225px"></div>
<div style="left:15px;top:226px">1、盐酸奥洛他定片(贝飞灵)</div>
<div style="left:15px;top:245px">规格与总量:</div><div style="left:89px;top:245px"><i style="font-size:11px">5mg*14</i>片</div><div style="left:228px;top:245px">1盒</div>
<div style="left:15px;top:264px">用法与用量:</div><div style="left:92px;top:264px">口服</div><div style="left:138px;top:264px"><i style="font-size:11px">5mg</i></div><div style="left:198px;top:264px">一天2次</div>
<div style="left:15px;top:302px">2、氯苯那敏(扑尔敏)片</div>
<div style="left:15px;top:321px">规格与总量:</div><div style="left:89px;top:321px"><i>4mg*100</i>片</div><div style="left:217px;top:321px">21片</div>
<div style="left:15px;top:340px">用法与用量:</div><div style="left:92px;top:340px">口服</div><div style="left:138px;top:340px"><i style="font-size:11px">4mg</i></div><div style="left:198px;top:340px">一天3次</div>
</div>

<!-- dialog scrollbar -->
<div style="left:1756px;top:349px;width:20px;height:444px;background:#3e3e3e"></div>
<svg style="left:1761px;top:354px" width="10" height="6"><path d="M0 6h10L5 0z" fill="#aaa"/></svg>
<div style="left:1757px;top:368px;width:17px;height:270px;background:linear-gradient(90deg,#f2f2f4,#dfe0e4 50%,#b8b8c0);border-radius:2px"></div>
<div style="left:1761px;top:500px;width:9px;height:1px;background:#777"></div>
<div style="left:1761px;top:503px;width:9px;height:1px;background:#777"></div>
<div style="left:1761px;top:506px;width:9px;height:1px;background:#777"></div>
<svg style="left:1761px;top:781px" width="10" height="6"><path d="M0 0h10L5 6z" fill="#aaa"/></svg>

<!-- status bar -->
<div style="left:1000px;top:793px;width:776px;height:26px;background:linear-gradient(#3a3c40 0,#3f4145 35%,#2a2b2d 40%,#4c4d4f 100%);border-bottom:1px solid #777;box-sizing:border-box"></div>
<span class="t" style="left:1003px;top:797px;font-size:13px;color:#eee">第1页共2页</span>
<div style="left:1530px;top:794px;width:246px;height:25px;background:linear-gradient(#9a9b9e,#6b6c6f 50%,#3a3b3d);border-left:1px solid #aaa;box-sizing:border-box"></div>
<div style="left:1536px;top:800px;width:64px;height:16px;background:#cfdbee;border:1px solid #e8eef8;box-sizing:border-box"></div>
<svg style="left:1539px;top:801px" width="60" height="14" fill="none" stroke="#3a5a90"><rect x="1" y="1" width="12" height="12"/><path d="M3 7h8M3 4h8M3 10h8"/><rect x="24" y="1" width="9" height="12"/><path d="M26 5h5M26 8h5"/><rect x="44" y="1" width="12" height="12"/><path d="M46 3.500h8M46 6h8M46 8.500h8M46 11h8"/></svg>
<span class="t" style="left:1608px;top:796px;font-size:12px;color:#fff">100%</span>
<div style="left:1649px;top:807px;width:102px;height:1px;background:#ddd"></div>
<div style="left:1642px;top:800px;width:14px;height:14px;border-radius:50%;background:#9a9ca0;border:1px solid #ddd;box-sizing:border-box"></div>
<div style="left:1645px;top:806px;width:8px;height:2px;background:#fff"></div>
<div style="left:1695px;top:800px;width:8px;height:14px;background:#ccc;border:1px solid #777;box-sizing:border-box;border-radius:0 0 4px 4px"></div>
<div style="left:1744px;top:800px;width:14px;height:14px;border-radius:50%;background:#9a9ca0;border:1px solid #ddd;box-sizing:border-box"></div>
<div style="left:1747px;top:806px;width:8px;height:2px;background:#fff"></div>
<div style="left:1750px;top:803px;width:2px;height:8px;background:#fff"></div>

<!-- annotations -->
<div class="red" style="left:481px;top:593px;width:74px;height:358px"></div>
<div class="red" style="left:555px;top:714px;width:152px;height:62px;border-left:none"></div>
<div class="red" style="left:1098px;top:497px;width:534px;height:26px"></div>

<!-- bottom -->
<div style="left:0;top:1024px;width:1859px;height:6px;background:#ccc"></div>
<div style="left:0;top:1030px;width:1879px;height:15px;background:#232323"></div>
<div style="left:134px;top:1040px;width:24px;height:24px;border-radius:50%;background:linear-gradient(90deg,#2fb3d8,#3ad0a8)"></div>
<div style="left:196px;top:1040px;width:24px;height:24px;border-radius:50%;background:#e0392b"></div>
<div style="left:258px;top:1040px;width:24px;height:8px;background:#dfe6f2"></div>
<div style="left:261px;top:1042px;width:12px;height:6px;background:#2a3fd0"></div>
<div style="left:317px;top:1040px;width:15px;height:8px;background:#1a6fd0"></div>
<div style="left:333px;top:1040px;width:14px;height:8px;background:#ddd"></div>
<div style="left:389px;top:1041px;width:16px;height:7px;background:#b8b8b8"></div>
<span class="t" style="left:1779px;top:1033px;font-size:14px;color:#eee">9:21</span>
</div></body></html>
